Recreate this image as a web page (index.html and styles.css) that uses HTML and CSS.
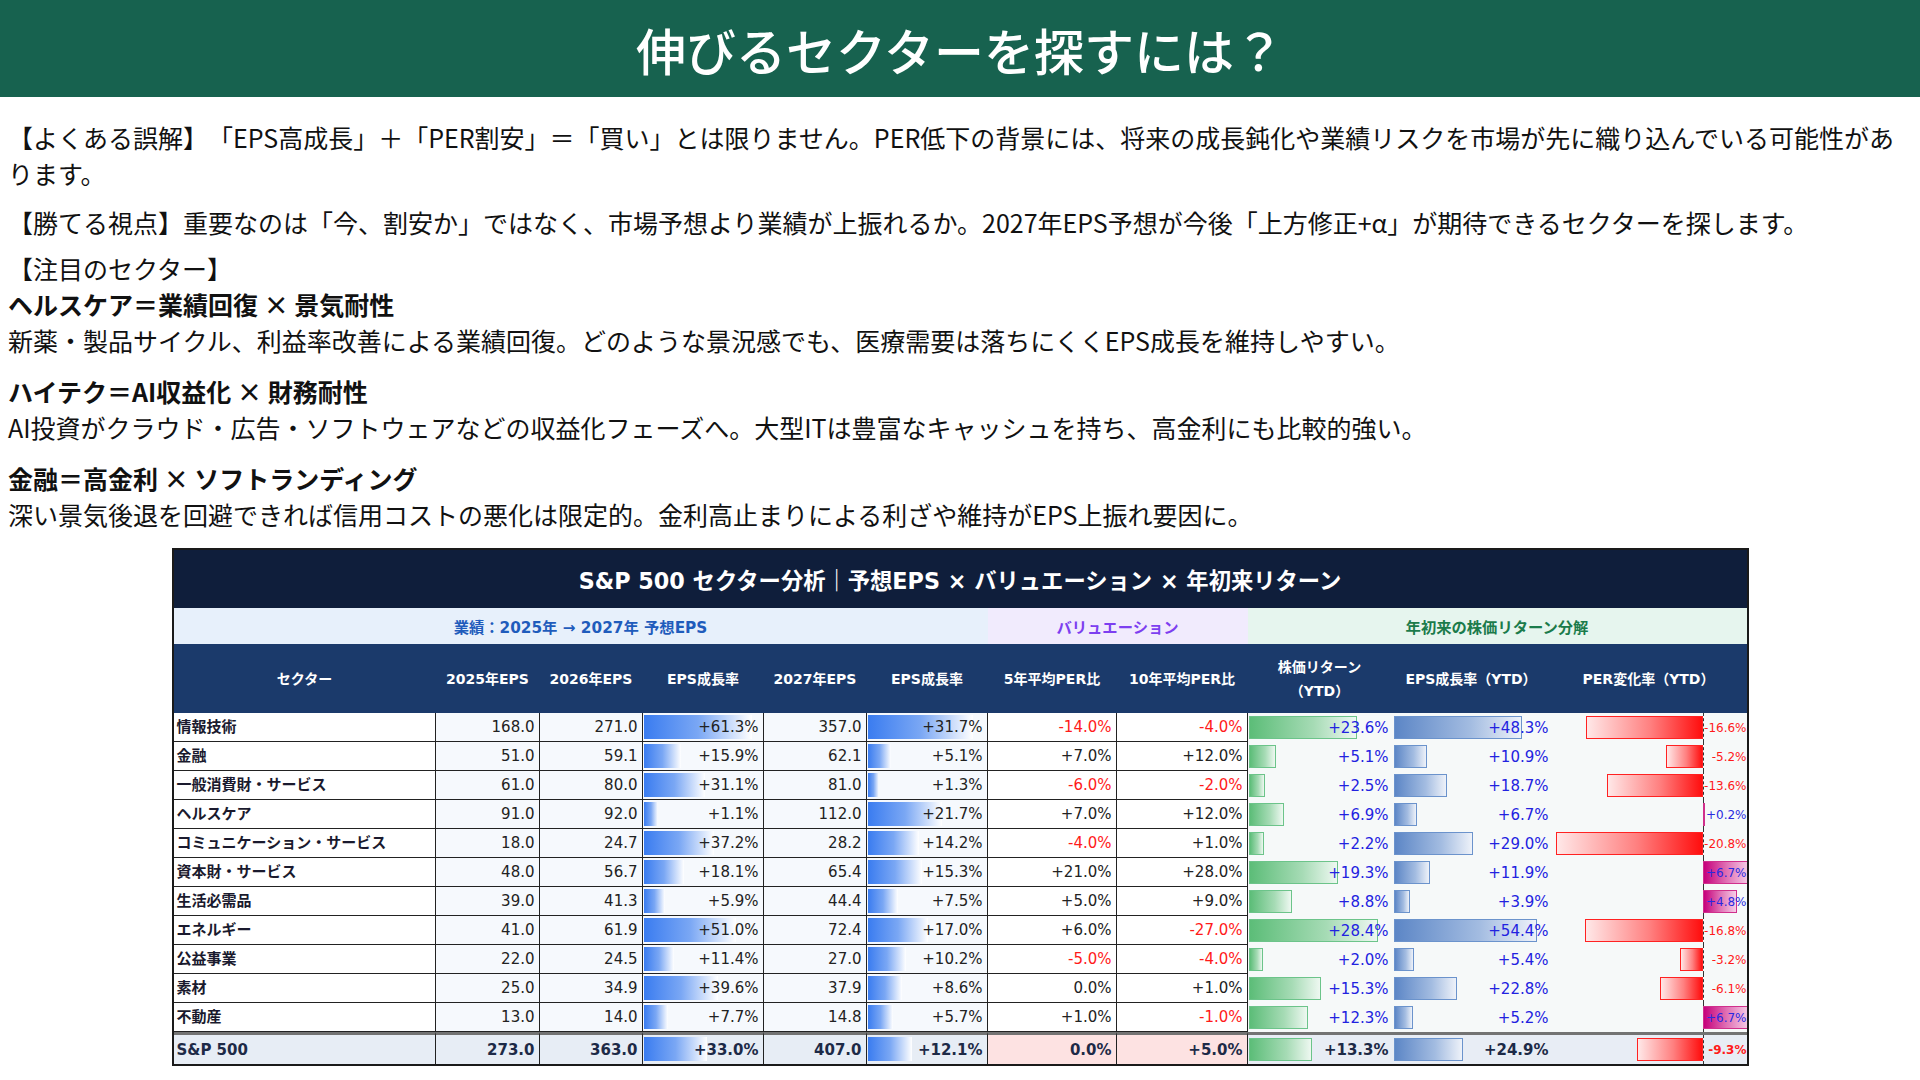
FILE: index.html
```html
<!DOCTYPE html>
<html lang="ja">
<head>
<meta charset="utf-8">
<title>伸びるセクターを探すには？</title>
<link rel="stylesheet" href="styles.css">
</head>
<body>
<header class="hero"><h1>伸びるセクターを探すには？</h1></header>
<main class="content">
  <div class="intro">
    <p>【よくある誤解】「EPS高成長」＋「PER割安」＝「買い」とは限りません。PER低下の背景には、将来の成長鈍化や業績リスクを市場が先に織り込んでいる可能性があります。</p>
    <p class="p2">【勝てる視点】重要なのは「今、割安か」ではなく、市場予想より業績が上振れるか。2027年EPS予想が今後「上方修正+α」が期待できるセクターを探します。</p>
    <p class="p3">【注目のセクター】</p>
    <section class="sector">
      <h2>ヘルスケア＝業績回復 × 景気耐性</h2>
      <p>新薬・製品サイクル、利益率改善による業績回復。どのような景況感でも、医療需要は落ちにくくEPS成長を維持しやすい。</p>
    </section>
    <section class="sector">
      <h2>ハイテク＝AI収益化 × 財務耐性</h2>
      <p>AI投資がクラウド・広告・ソフトウェアなどの収益化フェーズへ。大型ITは豊富なキャッシュを持ち、高金利にも比較的強い。</p>
    </section>
    <section class="sector">
      <h2>金融＝高金利 × ソフトランディング</h2>
      <p>深い景気後退を回避できれば信用コストの悪化は限定的。金利高止まりによる利ざや維持がEPS上振れ要因に。</p>
    </section>
  </div>

  <div class="tbl">
    <div class="ttl">S&amp;P 500 セクター分析｜予想EPS × バリュエーション × 年初来リターン</div>
    <div class="sub s1">業績：2025年 → 2027年 予想EPS</div>
    <div class="sub s2">バリュエーション</div>
    <div class="sub s3">年初来の株価リターン分解</div>

    <div class="h">セクター</div>
    <div class="h">2025年EPS</div>
    <div class="h">2026年EPS</div>
    <div class="h">EPS成長率</div>
    <div class="h">2027年EPS</div>
    <div class="h">EPS成長率</div>
    <div class="h">5年平均PER比</div>
    <div class="h">10年平均PER比</div>
    <div class="h">株価リターン（YTD）</div>
    <div class="h">EPS成長率（YTD）</div>
    <div class="h">PER変化率（YTD）</div>

    <!-- 情報技術 -->
    <div class="d sec">情報技術</div>
    <div class="d n">168.0</div>
    <div class="d n">271.0</div>
    <div class="d n g"><i class="bar bb" style="width:108px"></i><span>+61.3%</span></div>
    <div class="d n">357.0</div>
    <div class="d n g"><i class="bar bb" style="width:105px"></i><span>+31.7%</span></div>
    <div class="d n pe red">-14.0%</div>
    <div class="d n pe red">-4.0%</div>
    <div class="d y r"><i class="bar bg" style="width:108px"></i><span>+23.6%</span></div>
    <div class="d y e"><i class="bar bl" style="width:128px"></i><span>+48.3%</span></div>
    <div class="d y p"><i class="bar br" style="width:117px"></i><span class="red">-16.6%</span></div>

    <!-- 金融 -->
    <div class="d sec">金融</div>
    <div class="d n">51.0</div>
    <div class="d n">59.1</div>
    <div class="d n g"><i class="bar bb" style="width:37px"></i><span>+15.9%</span></div>
    <div class="d n">62.1</div>
    <div class="d n g"><i class="bar bb" style="width:23px"></i><span>+5.1%</span></div>
    <div class="d n pe">+7.0%</div>
    <div class="d n pe">+12.0%</div>
    <div class="d y r"><i class="bar bg" style="width:27px"></i><span>+5.1%</span></div>
    <div class="d y e"><i class="bar bl" style="width:33px"></i><span>+10.9%</span></div>
    <div class="d y p"><i class="bar br" style="width:37px"></i><span class="red">-5.2%</span></div>

    <!-- 一般消費財・サービス -->
    <div class="d sec">一般消費財・サービス</div>
    <div class="d n">61.0</div>
    <div class="d n">80.0</div>
    <div class="d n g"><i class="bar bb" style="width:61px"></i><span>+31.1%</span></div>
    <div class="d n">81.0</div>
    <div class="d n g"><i class="bar bb" style="width:11px"></i><span>+1.3%</span></div>
    <div class="d n pe red">-6.0%</div>
    <div class="d n pe red">-2.0%</div>
    <div class="d y r"><i class="bar bg" style="width:16px"></i><span>+2.5%</span></div>
    <div class="d y e"><i class="bar bl" style="width:53px"></i><span>+18.7%</span></div>
    <div class="d y p"><i class="bar br" style="width:96px"></i><span class="red">-13.6%</span></div>

    <!-- ヘルスケア -->
    <div class="d sec">ヘルスケア</div>
    <div class="d n">91.0</div>
    <div class="d n">92.0</div>
    <div class="d n g"><i class="bar bb" style="width:14px"></i><span>+1.1%</span></div>
    <div class="d n">112.0</div>
    <div class="d n g"><i class="bar bb" style="width:74px"></i><span>+21.7%</span></div>
    <div class="d n pe">+7.0%</div>
    <div class="d n pe">+12.0%</div>
    <div class="d y r"><i class="bar bg" style="width:35px"></i><span>+6.9%</span></div>
    <div class="d y e"><i class="bar bl" style="width:23px"></i><span>+6.7%</span></div>
    <div class="d y p"><i class="bar bm" style="width:2px"></i><span class="blu">+0.2%</span></div>

    <!-- コミュニケーション・サービス -->
    <div class="d sec">コミュニケーション・サービス</div>
    <div class="d n">18.0</div>
    <div class="d n">24.7</div>
    <div class="d n g"><i class="bar bb" style="width:70px"></i><span>+37.2%</span></div>
    <div class="d n">28.2</div>
    <div class="d n g"><i class="bar bb" style="width:51px"></i><span>+14.2%</span></div>
    <div class="d n pe red">-4.0%</div>
    <div class="d n pe">+1.0%</div>
    <div class="d y r"><i class="bar bg" style="width:15px"></i><span>+2.2%</span></div>
    <div class="d y e"><i class="bar bl" style="width:79px"></i><span>+29.0%</span></div>
    <div class="d y p"><i class="bar br" style="width:147px"></i><span class="red">-20.8%</span></div>

    <!-- 資本財・サービス -->
    <div class="d sec">資本財・サービス</div>
    <div class="d n">48.0</div>
    <div class="d n">56.7</div>
    <div class="d n g"><i class="bar bb" style="width:40px"></i><span>+18.1%</span></div>
    <div class="d n">65.4</div>
    <div class="d n g"><i class="bar bb" style="width:54px"></i><span>+15.3%</span></div>
    <div class="d n pe">+21.0%</div>
    <div class="d n pe">+28.0%</div>
    <div class="d y r"><i class="bar bg" style="width:89px"></i><span>+19.3%</span></div>
    <div class="d y e"><i class="bar bl" style="width:36px"></i><span>+11.9%</span></div>
    <div class="d y p"><i class="bar bm" style="width:47px"></i><span class="blu">+6.7%</span></div>

    <!-- 生活必需品 -->
    <div class="d sec">生活必需品</div>
    <div class="d n">39.0</div>
    <div class="d n">41.3</div>
    <div class="d n g"><i class="bar bb" style="width:21px"></i><span>+5.9%</span></div>
    <div class="d n">44.4</div>
    <div class="d n g"><i class="bar bb" style="width:30px"></i><span>+7.5%</span></div>
    <div class="d n pe">+5.0%</div>
    <div class="d n pe">+9.0%</div>
    <div class="d y r"><i class="bar bg" style="width:43px"></i><span>+8.8%</span></div>
    <div class="d y e"><i class="bar bl" style="width:16px"></i><span>+3.9%</span></div>
    <div class="d y p"><i class="bar bm" style="width:34px"></i><span class="blu">+4.8%</span></div>

    <!-- エネルギー -->
    <div class="d sec">エネルギー</div>
    <div class="d n">41.0</div>
    <div class="d n">61.9</div>
    <div class="d n g"><i class="bar bb" style="width:92px"></i><span>+51.0%</span></div>
    <div class="d n">72.4</div>
    <div class="d n g"><i class="bar bb" style="width:60px"></i><span>+17.0%</span></div>
    <div class="d n pe">+6.0%</div>
    <div class="d n pe red">-27.0%</div>
    <div class="d y r"><i class="bar bg" style="width:129px"></i><span>+28.4%</span></div>
    <div class="d y e"><i class="bar bl" style="width:143px"></i><span>+54.4%</span></div>
    <div class="d y p"><i class="bar br" style="width:118px"></i><span class="red">-16.8%</span></div>

    <!-- 公益事業 -->
    <div class="d sec">公益事業</div>
    <div class="d n">22.0</div>
    <div class="d n">24.5</div>
    <div class="d n g"><i class="bar bb" style="width:30px"></i><span>+11.4%</span></div>
    <div class="d n">27.0</div>
    <div class="d n g"><i class="bar bb" style="width:38px"></i><span>+10.2%</span></div>
    <div class="d n pe red">-5.0%</div>
    <div class="d n pe red">-4.0%</div>
    <div class="d y r"><i class="bar bg" style="width:14px"></i><span>+2.0%</span></div>
    <div class="d y e"><i class="bar bl" style="width:20px"></i><span>+5.4%</span></div>
    <div class="d y p"><i class="bar br" style="width:23px"></i><span class="red">-3.2%</span></div>

    <!-- 素材 -->
    <div class="d sec">素材</div>
    <div class="d n">25.0</div>
    <div class="d n">34.9</div>
    <div class="d n g"><i class="bar bb" style="width:74px"></i><span>+39.6%</span></div>
    <div class="d n">37.9</div>
    <div class="d n g"><i class="bar bb" style="width:34px"></i><span>+8.6%</span></div>
    <div class="d n pe">0.0%</div>
    <div class="d n pe">+1.0%</div>
    <div class="d y r"><i class="bar bg" style="width:72px"></i><span>+15.3%</span></div>
    <div class="d y e"><i class="bar bl" style="width:63px"></i><span>+22.8%</span></div>
    <div class="d y p"><i class="bar br" style="width:43px"></i><span class="red">-6.1%</span></div>

    <!-- 不動産 -->
    <div class="d sec">不動産</div>
    <div class="d n">13.0</div>
    <div class="d n">14.0</div>
    <div class="d n g"><i class="bar bb" style="width:24px"></i><span>+7.7%</span></div>
    <div class="d n">14.8</div>
    <div class="d n g"><i class="bar bb" style="width:25px"></i><span>+5.7%</span></div>
    <div class="d n pe">+1.0%</div>
    <div class="d n pe red">-1.0%</div>
    <div class="d y r"><i class="bar bg" style="width:59px"></i><span>+12.3%</span></div>
    <div class="d y e"><i class="bar bl" style="width:19px"></i><span>+5.2%</span></div>
    <div class="d y p"><i class="bar bm" style="width:47px"></i><span class="blu">+6.7%</span></div>

    <!-- S&P 500 -->
    <div class="t sec">S&amp;P 500</div>
    <div class="t n">273.0</div>
    <div class="t n">363.0</div>
    <div class="t n g"><i class="bar bb" style="width:63px"></i><span>+33.0%</span></div>
    <div class="t n">407.0</div>
    <div class="t n g"><i class="bar bb" style="width:44px"></i><span>+12.1%</span></div>
    <div class="t n pk">0.0%</div>
    <div class="t n pk">+5.0%</div>
    <div class="t y r"><i class="bar bg" style="width:63px"></i><span>+13.3%</span></div>
    <div class="t y e"><i class="bar bl" style="width:69px"></i><span>+24.9%</span></div>
    <div class="t y p"><i class="bar br" style="width:66px"></i><span class="red">-9.3%</span></div>
  </div>
</main>
</body>
</html>
```

FILE: styles.css
```css
* { box-sizing: border-box; }

body {
  margin: 0;
  background: #ffffff;
  color: #111111;
  font-family: "Noto Sans CJK JP", "Noto Sans", sans-serif;
  text-spacing-trim: space-all;
}

.hero {
  height: 97px;
  background: #17624f;
  display: flex;
  align-items: center;
  justify-content: center;
}

.hero h1 {
  margin: 0;
  color: #ffffff;
  font-size: 50px;
  font-weight: 500;
  line-height: 1;
}

.content {
  padding: 22px 8px 0;
}

.intro {
  padding-right: 16px;
}

.intro p {
  margin: 0;
  font-size: 25px;
  line-height: 36px;
}

.intro p.p2 { margin-top: 13px; }
.intro p.p3 { margin-top: 10px; }

.sector h2 {
  margin: 0;
  font-size: 25px;
  line-height: 36px;
  font-weight: 700;
}

.sector + .sector { margin-top: 15px; }

/* ---------- table ---------- */
.tbl {
  width: 1577px;
  margin: 16px auto 0;
  border: 2px solid #1a1a1a;
  display: grid;
  grid-template-columns: 262px 104px 103px 121px 103px 121px 129px 131px 144px 159px 196px;
  font-family: "DejaVu Sans", "Noto Sans CJK JP", sans-serif;
  font-size: 15px;
  color: #222222;
  background: #ffffff;
}

.ttl {
  grid-column: 1 / -1;
  height: 58px;
  background: #0f1e3b;
  color: #ffffff;
  font-size: 22.3px;
  font-weight: 700;
  display: flex;
  align-items: center;
  justify-content: center;
}

.sub {
  height: 36px;
  display: flex;
  align-items: center;
  justify-content: center;
  font-size: 15.3px;
  font-weight: 700;
}

.s1 { grid-column: span 6; background: #e7f0fb; color: #1f5cbc; }
.s2 { grid-column: span 2; background: #f1ebfd; color: #7d3ff0; }
.s3 { grid-column: span 3; background: #e6f5ee; color: #1b7b4b; }

.h {
  height: 69px;
  background: #1b3a6b;
  color: #ffffff;
  font-size: 14px;
  font-weight: 700;
  line-height: 24px;
  display: flex;
  align-items: center;
  justify-content: center;
  text-align: center;
  padding: 0 6px;
}

.d, .t {
  position: relative;
  display: flex;
  align-items: center;
  overflow: hidden;
  white-space: nowrap;
  line-height: 18px;
}

.d { height: 29px; }

.t {
  height: 32px;
  border-top: 3px solid #737373;
  background: #e7edf5;
  font-weight: 700;
  color: #1d2a47;
}

.sec, .n {
  border-right: 1px solid #222222;
}

.d.sec, .d.n {
  border-bottom: 1px solid #222222;
}

.sec {
  padding-left: 3px;
  font-weight: 700;
  color: #1a1a2e;
  background: #ffffff;
}

.n {
  justify-content: flex-end;
  padding-right: 4px;
  background: #f6f9fd;
}

.n.pe { background: #ffffff; }

.t.sec, .t.n { background: #e7edf5; }
.t.sec { color: #1d2a47; }
.t.pk { background: #fde2e2; }

.y {
  justify-content: flex-end;
  background: #f6f9f9;
  color: #2222e0;
}

.t.y { background: #e8edf5; color: #1d2a47; }

.r { padding-right: 3px; }
.e { padding-right: 2px; }

.p {
  padding-right: 0;
  font-size: 12px;
}

.p::before {
  content: "";
  position: absolute;
  left: 152px;
  top: 0;
  bottom: 0;
  border-left: 1px dashed #333333;
  z-index: 0;
}

.d span, .t span { position: relative; z-index: 1; }

.red { color: #ff1a1a; }
.t .red, .t.red { color: #ff1a1a; }
.blu { color: #2a2ae0; }

.bar {
  position: absolute;
  display: block;
}

.bb {
  left: 1px;
  top: 2px;
  height: 24px;
  background: linear-gradient(90deg, #3a7cf0 0%, #7aa7f4 50%, #ffffff 100%);
}

.bg {
  left: 1px;
  top: 3px;
  height: 23px;
  background: linear-gradient(90deg, #5cbd78 0%, #a6dbb5 60%, #eef8f1 100%);
  border: 1px solid #6cc48a;
}

.bl {
  left: 2px;
  top: 3px;
  height: 23px;
  background: linear-gradient(90deg, #5c86c6 0%, #a3bce1 60%, #eef2f9 100%);
  border: 1px solid #6b93cc;
}

.br {
  right: 44px;
  top: 3px;
  height: 23px;
  background: linear-gradient(90deg, #ffe8e8 0%, #ff8080 55%, #ff0e0e 100%);
  border: 1px solid #ff2222;
}

.bm {
  left: 152px;
  top: 3px;
  height: 23px;
  background: linear-gradient(90deg, #c6007b 0%, #e070b4 50%, #f6cfe8 100%);
  border: 1px solid #d0308c;
}
```
